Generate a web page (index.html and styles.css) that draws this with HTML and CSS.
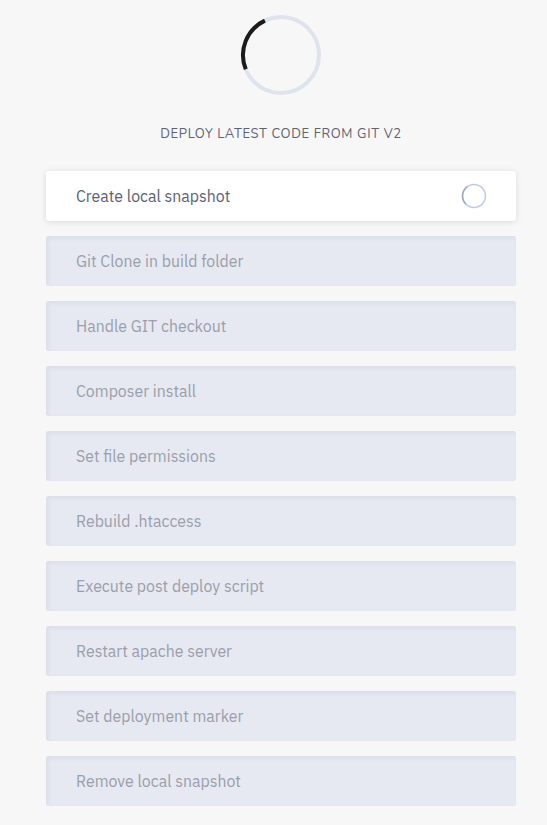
FILE: index.html
```html
<!DOCTYPE html>
<html>
<head>
<meta charset="utf-8">
<link rel="stylesheet" href="styles.css">
</head>
<body>
<div class="page">
  <div class="loader">
    <svg width="82" height="82" viewBox="0 0 82 82">
      <circle cx="41" cy="41" r="38" fill="none" stroke="#dfe3ec" stroke-width="4"/>
      <path d="M 5.8 55.3 A 38 38 0 0 1 24.9 6.6" fill="none" stroke="#1b1b1b" stroke-width="4"/>
    </svg>
  </div>
  <h1 class="title">DEPLOY LATEST CODE FROM GIT V2</h1>
  <ul class="steps">
    <li class="step active">
      <span>Create local snapshot</span>
      <svg class="mini" width="26" height="26" viewBox="0 0 26 26">
        <circle cx="13" cy="13" r="11.5" fill="none" stroke="#c3cbe2" stroke-width="1.5"/>
        <path d="M 4.9 21.1 A 11.5 11.5 0 0 1 6.5 3.5" fill="none" stroke="#9aa6cc" stroke-width="1.5"/>
      </svg>
    </li>
    <li class="step">Git Clone in build folder</li>
    <li class="step">Handle GIT checkout</li>
    <li class="step">Composer install</li>
    <li class="step">Set file permissions</li>
    <li class="step">Rebuild .htaccess</li>
    <li class="step">Execute post deploy script</li>
    <li class="step">Restart apache server</li>
    <li class="step">Set deployment marker</li>
    <li class="step">Remove local snapshot</li>
  </ul>
</div>
</body>
</html>
```

FILE: styles.css
```css
html, body {
  margin: 0;
  padding: 0;
  background: #f7f7f7;
}
.page {
  width: 547px;
  display: flex;
  flex-direction: column;
  align-items: center;
  padding-top: 14px;
}
.loader {
  width: 82px;
  height: 82px;
  margin-left: 15px;
}
.loader svg { display: block; }
.title {
  margin: 29px 0 0 15px;
  font-family: "Nunito", "Lato", "Open Sans", sans-serif;
  font-weight: 400;
  font-size: 13px;
  letter-spacing: 0.65px;
  color: #5f6272;
  line-height: 18px;
}
.steps {
  list-style: none;
  margin: 28px 0 0 15px;
  padding: 0;
  width: 470px;
  display: flex;
  flex-direction: column;
  gap: 15px;
}
.step {
  height: 50px;
  box-sizing: border-box;
  border-radius: 3px;
  padding: 0 30px;
  display: flex;
  align-items: center;
  justify-content: space-between;
  font-family: "IBM Plex Sans", "Open Sans", sans-serif;
  font-size: 15.9px;
  color: #9b9eab;
  background: #e6e9f1;
  box-shadow: inset 2px 2px 4px rgba(160, 170, 195, 0.18);
}
.step.active {
  background: #ffffff;
  color: #5c6070;
  box-shadow: 0 1px 6px rgba(0, 0, 0, 0.12);
  padding-right: 29px;
}
.mini { display: block; }
```
